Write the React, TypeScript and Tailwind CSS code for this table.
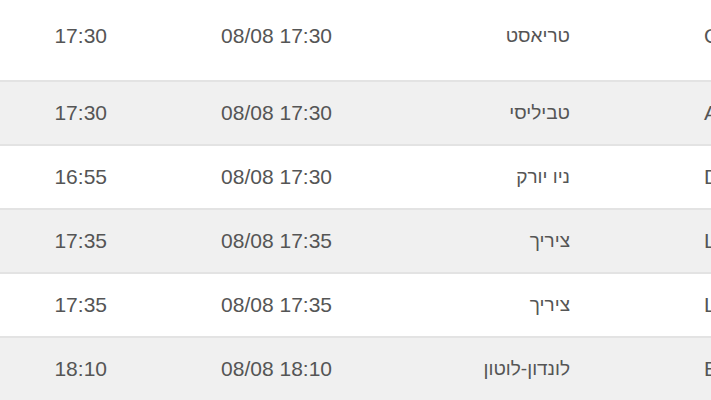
const flights = [
  { code: 'OS 8519', city: 'טריאסט', sched: '08/08 17:30', actual: '17:30' },
  { code: 'A9 694', city: 'טביליסי', sched: '08/08 17:30', actual: '17:30' },
  { code: 'DL 234', city: 'ניו יורק', sched: '08/08 17:30', actual: '16:55' },
  { code: 'LX 257', city: 'ציריך', sched: '08/08 17:35', actual: '17:35' },
  { code: 'LX 253', city: 'ציריך', sched: '08/08 17:35', actual: '17:35' },
  { code: 'EZ 2084', city: 'לונדון-לוטון', sched: '08/08 18:10', actual: '18:10' },
]

export default function App() {
  return (
    <div className="w-[711px] h-[400px] overflow-hidden bg-white font-['Liberation_Sans',Arial,sans-serif] text-[21px] text-[#555]">
      <div dir="rtl" className="w-[900px]">
        {flights.map((f, i) => (
          <div
            key={i}
            className={`grid grid-cols-[196px_364px_225px_115px] items-center border-b-2 border-[#e3e3e3] ${
              i === 0 ? 'h-[82px] pb-[8px]' : 'h-[64px]'
            } ${i % 2 === 1 ? 'bg-[#f0f0f0]' : 'bg-white'}`}
          >
            <div dir="ltr" className="text-left whitespace-nowrap">{f.code}</div>
            <div className="text-right pr-[134px] whitespace-nowrap text-[19px]">{f.city}</div>
            <div dir="ltr" className="text-right pr-[8px] whitespace-nowrap">{f.sched}</div>
            <div dir="ltr" className="text-right pr-[8px] whitespace-nowrap">{f.actual}</div>
          </div>
        ))}
      </div>
    </div>
  )
}
